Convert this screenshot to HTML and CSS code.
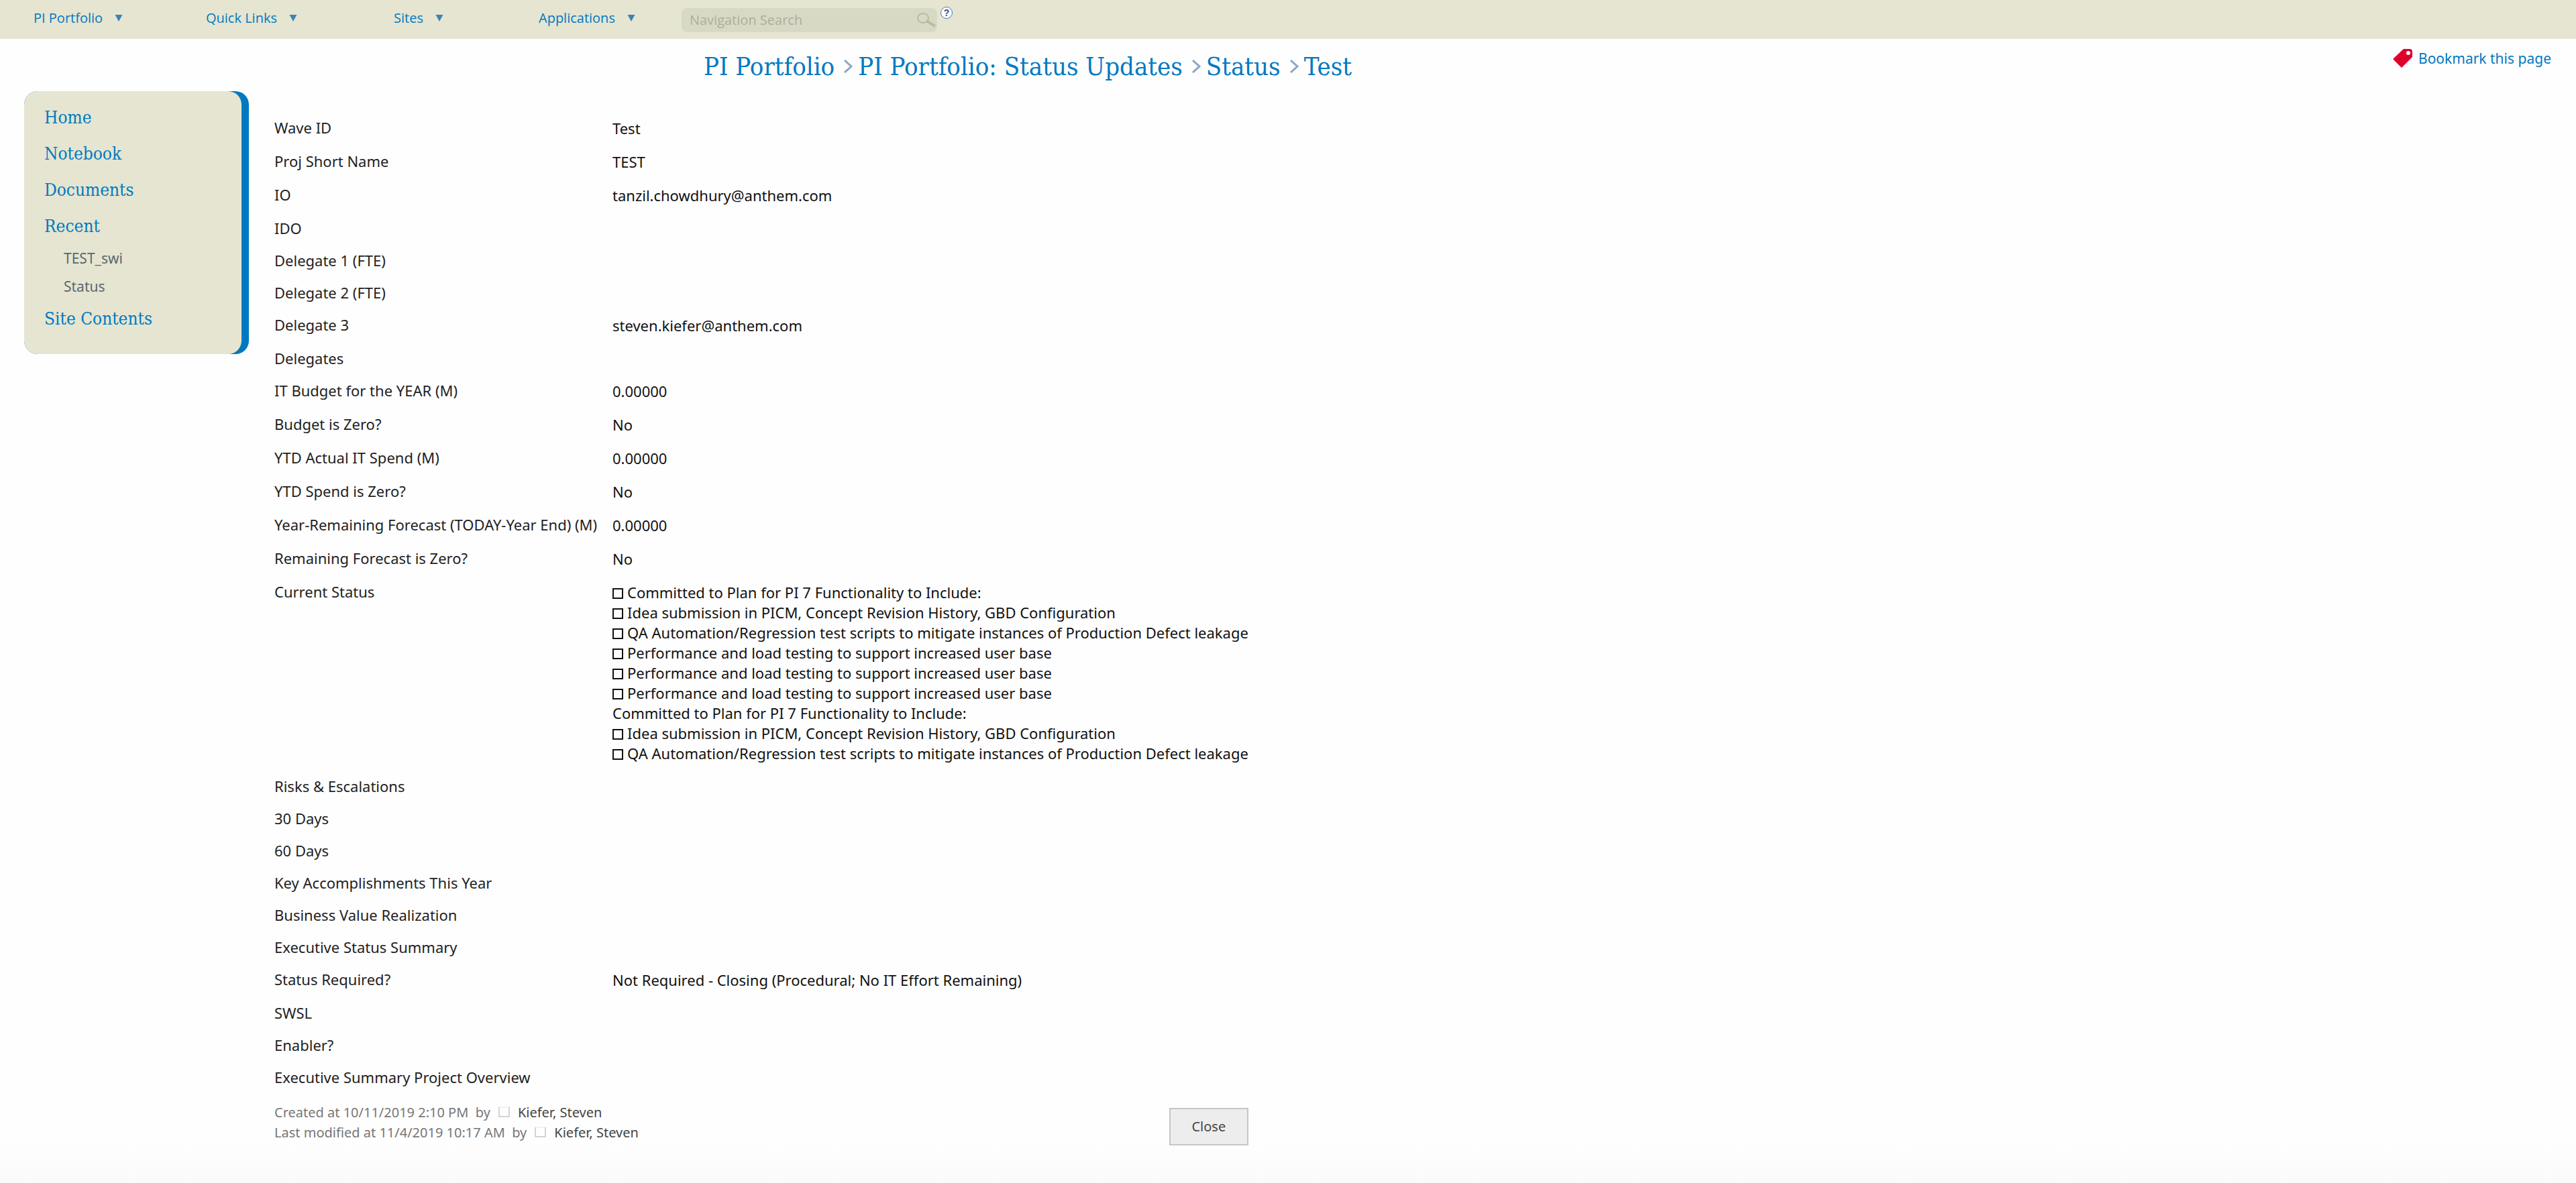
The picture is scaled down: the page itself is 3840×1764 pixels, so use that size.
FILE: index.html
```html
<!DOCTYPE html>
<html lang="en">
<head>
<meta charset="utf-8">
<title>PI Portfolio: Status Updates - Test</title>
<link rel="stylesheet" href="styles.css">
</head>
<body>
<header class="topbar">
  <nav class="menu" aria-label="Global">
    <a href="#">PI Portfolio<svg class="caret" viewBox="0 0 12 11"><path d="M0 0h12L6 11z"/></svg></a>
    <a href="#">Quick Links<svg class="caret" viewBox="0 0 12 11"><path d="M0 0h12L6 11z"/></svg></a>
    <a href="#">Sites<svg class="caret" viewBox="0 0 12 11"><path d="M0 0h12L6 11z"/></svg></a>
    <a href="#">Applications<svg class="caret" viewBox="0 0 12 11"><path d="M0 0h12L6 11z"/></svg></a>
  </nav>
  <form class="search">
    <input class="search-input" type="text" placeholder="Navigation Search" aria-label="Navigation Search">
    <button class="search-go" type="button" aria-label="Search">
      <svg viewBox="0 0 30 24" width="30" height="24"><ellipse cx="9" cy="9" rx="8" ry="7" fill="none" stroke="#bcbaa0" stroke-width="2"/><path d="M14 13L27 21" stroke="#bcbaa0" stroke-width="4"/></svg>
    </button>
  </form>
  <a class="help" href="#" aria-label="Help">?</a>
</header>
<div class="titlebar">
  <nav class="crumbs" aria-label="Breadcrumb">
    <a href="#">PI Portfolio</a>
    <svg class="sep" viewBox="0 0 14 20"><path d="M1 1l10 9-10 9"/></svg>
    <a href="#">PI Portfolio: Status Updates</a>
    <svg class="sep" viewBox="0 0 14 20"><path d="M1 1l10 9-10 9"/></svg>
    <a href="#">Status</a>
    <svg class="sep" viewBox="0 0 14 20"><path d="M1 1l10 9-10 9"/></svg>
    <a href="#">Test</a>
  </nav>
  <a class="bookmark" href="#">
    <svg viewBox="0 0 30 30" width="30" height="30"><path fill="#e1002a" fill-rule="evenodd" d="M16 1h9q4 0 4 4v8L14 28q-1 1-2 0L1 17q-1-1 0-2zM23 4a3 3 0 1 0 0 6 3 3 0 0 0 0-6z"/></svg>
    Bookmark this page
  </a>
</div>
<div class="page">
  <div class="side">
    <nav class="side-panel" aria-label="Site">
      <a href="#">Home</a>
      <a href="#">Notebook</a>
      <a href="#">Documents</a>
      <a href="#">Recent</a>
      <a class="sub" href="#">TEST_swi</a>
      <a class="sub" href="#">Status</a>
      <a href="#">Site Contents</a>
    </nav>
  </div>
  <main class="main">
    <table class="fields">
      <tr><th scope="row">Wave ID</th><td>Test</td></tr>
      <tr><th scope="row">Proj Short Name</th><td>TEST</td></tr>
      <tr><th scope="row">IO</th><td>tanzil.chowdhury@anthem.com</td></tr>
      <tr><th scope="row">IDO</th><td></td></tr>
      <tr><th scope="row">Delegate 1 (FTE)</th><td></td></tr>
      <tr><th scope="row">Delegate 2 (FTE)</th><td></td></tr>
      <tr><th scope="row">Delegate 3</th><td>steven.kiefer@anthem.com</td></tr>
      <tr><th scope="row">Delegates</th><td></td></tr>
      <tr><th scope="row">IT Budget for the YEAR (M)</th><td>0.00000</td></tr>
      <tr><th scope="row">Budget is Zero?</th><td>No</td></tr>
      <tr><th scope="row">YTD Actual IT Spend (M)</th><td>0.00000</td></tr>
      <tr><th scope="row">YTD Spend is Zero?</th><td>No</td></tr>
      <tr><th scope="row">Year-Remaining Forecast (TODAY-Year End) (M)</th><td>0.00000</td></tr>
      <tr><th scope="row">Remaining Forecast is Zero?</th><td>No</td></tr>
      <tr><th scope="row">Current Status</th><td>
        <div class="item">Committed to Plan for PI 7 Functionality to Include:</div>
        <div class="item">Idea submission in PICM, Concept Revision History, GBD Configuration</div>
        <div class="item">QA Automation/Regression test scripts to mitigate instances of Production Defect leakage</div>
        <div class="item">Performance and load testing to support increased user base</div>
        <div class="item">Performance and load testing to support increased user base</div>
        <div class="item">Performance and load testing to support increased user base</div>
        <div>Committed to Plan for PI 7 Functionality to Include:</div>
        <div class="item">Idea submission in PICM, Concept Revision History, GBD Configuration</div>
        <div class="item">QA Automation/Regression test scripts to mitigate instances of Production Defect leakage</div>
      </td></tr>
      <tr><th scope="row">Risks &amp; Escalations</th><td></td></tr>
      <tr><th scope="row">30 Days</th><td></td></tr>
      <tr><th scope="row">60 Days</th><td></td></tr>
      <tr><th scope="row">Key Accomplishments This Year</th><td></td></tr>
      <tr><th scope="row">Business Value Realization</th><td></td></tr>
      <tr><th scope="row">Executive Status Summary</th><td></td></tr>
      <tr><th scope="row">Status Required?</th><td>Not Required - Closing (Procedural; No IT Effort Remaining)</td></tr>
      <tr><th scope="row">SWSL</th><td></td></tr>
      <tr><th scope="row">Enabler?</th><td></td></tr>
      <tr><th scope="row">Executive Summary Project Overview</th><td></td></tr>
    </table>
    <footer class="foot">
      <div class="stamps">
        <div>Created at 10/11/2019 2:10 PM &nbsp;by<span class="presence"></span><a href="#">Kiefer, Steven</a></div>
        <div>Last modified at 11/4/2019 10:17 AM &nbsp;by<span class="presence"></span><a href="#">Kiefer, Steven</a></div>
      </div>
      <button class="close" type="button">Close</button>
    </footer>
  </main>
</div>
</body>
</html>
```
FILE: styles.css
```css
*, *::before { box-sizing: border-box; }
body {
  margin: 0;
  min-height: 100vh;
  background: linear-gradient(#fefefe, #fafafa) bottom / 100% 60px no-repeat #fefefe;
  font: 22px/30px "Noto Sans", sans-serif;
  color: #111;
}
a { color: #0079c1; text-decoration: none; }
.topbar {
  display: flex;
  align-items: flex-start;
  height: 58px;
  padding-left: 50px;
  background: #e5e5d1;
}
.menu {
  display: grid;
  grid-template-columns: 257px 280px 216px 213px;
  padding-top: 12px;
  font: 20px/30px "Open Sans", sans-serif;
}
.caret { width: 12px; height: 10px; margin-left: 18px; fill: #3c82b4; vertical-align: 2px; }
.search {
  display: flex;
  align-items: center;
  width: 381px;
  height: 36px;
  margin-top: 12px;
  border-radius: 8px;
  background: #d8d9c5;
}
.search-input {
  flex: 1;
  min-width: 0;
  padding: 0 12px;
  border: 0;
  background: none;
  font: 20px/30px "Open Sans", sans-serif;
}
.search-input::placeholder { color: #aeae99; opacity: 1; }
.search-go { display: flex; padding: 0; border: 0; background: none; }
.help {
  width: 18px;
  height: 18px;
  margin: 10px 0 0 5px;
  border: 1px solid #5a76a8;
  border-radius: 50%;
  background: #fff;
  color: #2f4f8f;
  font: bold 14px/16px "Liberation Sans", sans-serif;
  text-align: center;
}
.titlebar {
  display: flex;
  justify-content: space-between;
  align-items: flex-start;
  height: 78px;
  padding: 14px 37px 0 1049px;
}
.crumbs { display: flex; align-items: center; font: 38px/54px "DejaVu Serif Condensed", "DejaVu Serif", serif; }
.sep { width: 14px; height: 20px; margin: 0 7px 0 14px; fill: none; stroke: #8aa6c4; stroke-width: 3; }
.bookmark { display: flex; align-items: center; gap: 8px; font-size: 21px; }
.page { display: flex; align-items: flex-start; padding-left: 36px; }
.side { width: 335px; padding-right: 11px; border-radius: 20px; background: #0079c1; }
.side-panel {
  display: flex;
  flex-direction: column;
  padding: 12px 30px 26px;
  border-radius: 20px;
  background: #e5e5d1;
  font: 26px/54px "DejaVu Serif Condensed", "DejaVu Serif", serif;
}
.side-panel .sub { padding-left: 29px; color: #5b6770; font: 21px/42px "Noto Sans", sans-serif; }
.main { padding: 32px 0 0 38px; }
.fields { border-collapse: collapse; }
.fields th {
  width: 504px;
  padding: 8px 0 12px;
  color: #222;
  font: 22px/28px "Noto Sans", sans-serif;
  text-align: left;
  vertical-align: top;
  white-space: nowrap;
}
.fields td { padding: 8px 0 12px; vertical-align: top; }
.item::before {
  content: "";
  display: inline-block;
  width: 16px;
  height: 16px;
  margin-right: 6px;
  border: 2px solid #111;
  vertical-align: -1px;
}
.foot { display: flex; justify-content: space-between; align-items: flex-start; padding-top: 12px; color: #777; font-size: 20px; }
.stamps a { color: #444; }
.presence { display: inline-block; width: 17px; height: 16px; margin: 0 12px; border: 2px solid #d4d4d4; border-top-color: #f2f2f2; }
.close {
  width: 118px;
  height: 56px;
  margin-top: 8px;
  border: 2px solid #c6c6c6;
  background: #ededed;
  color: #444;
  font: 20px/30px "Noto Sans", sans-serif;
}
```
